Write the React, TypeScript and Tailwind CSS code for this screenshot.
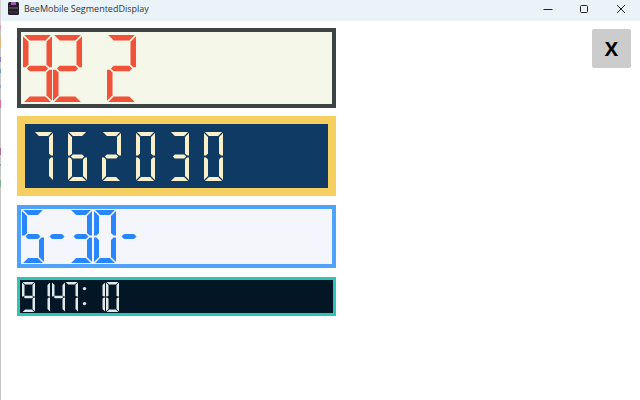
import type { ReactNode } from "react";

const SEGMENTS: Record<string, string> = {
  "0": "abcdef",
  "1": "bc",
  "2": "abdeg",
  "3": "abcdg",
  "4": "bcfg",
  "5": "acdfg",
  "6": "acdefg",
  "7": "abc",
  "9": "abcdfg",
  "-": "g",
  " ": "",
};

// desktop showing through at the window's left edge: [height, colour]
const EDGE: [number, string][] = [
  [25, "#d4d4d4"],
  [5, "#e79ab0"],
  [8, "#c4c4c4"],
  [9, "#e6b77e"],
  [10, "#c4c4c4"],
  [5, "#8f7be0"],
  [7, "#c4c4c4"],
  [4, "#6f9fd8"],
  [12, "#c4c4c4"],
  [3, "#7fa8d0"],
  [12, "#c4c4c4"],
  [8, "#e0709a"],
  [40, "#c4c4c4"],
  [7, "#b06a96"],
  [9, "#c4c4c4"],
  [2, "#7fb08f"],
  [14, "#c4c4c4"],
  [7, "#7fb08f"],
  [213, "#c4c4c4"],
];

interface DigitProps {
  char: string;
  w: number;
  h: number;
  t: number;
  color: string;
  className?: string;
}

// one seven segment digit, segments a-g clockwise from the top, g is the middle bar
function Digit({ char, w, h, t, color, className = "" }: DigitProps) {
  const g = Math.max(0.6, t * 0.22);
  const m = h / 2;
  const polys: Record<string, string> = {
    a: `${g},0 ${w - g},0 ${w - g - t},${t} ${g + t},${t}`,
    b: `${w},${g} ${w},${m - g} ${w - t / 2},${m - g} ${w - t},${m - g - t / 2} ${w - t},${g + t}`,
    c: `${w},${m + g} ${w},${h - g} ${w - t},${h - g - t} ${w - t},${m + g + t / 2} ${w - t / 2},${m + g}`,
    d: `${g},${h} ${w - g},${h} ${w - g - t},${h - t} ${g + t},${h - t}`,
    e: `0,${m + g} 0,${h - g} ${t},${h - g - t} ${t},${m + g + t / 2} ${t / 2},${m + g}`,
    f: `0,${g} 0,${m - g} ${t / 2},${m - g} ${t},${m - g - t / 2} ${t},${g + t}`,
    g: `${t * 0.7},${m} ${t * 1.2},${m - t / 2} ${w - t * 1.2},${m - t / 2} ${w - t * 0.7},${m} ${w - t * 1.2},${m + t / 2} ${t * 1.2},${m + t / 2}`,
  };
  return (
    <svg width={w} height={h} viewBox={`0 0 ${w} ${h}`} className={`block shrink-0 ${className}`}>
      {SEGMENTS[char].split("").map((s) => (
        <polygon key={s} points={polys[s]} fill={color} />
      ))}
    </svg>
  );
}

function Colon({ h, color }: { h: number; color: string }) {
  return (
    <svg width={5} height={h} viewBox={`0 0 5 ${h}`} className="ml-[4px] block shrink-0">
      <circle cx={2.5} cy={h * 0.22} r={1.7} fill={color} />
      <circle cx={2.5} cy={h * 0.72} r={1.7} fill={color} />
    </svg>
  );
}

function TitleBar() {
  return (
    <div className="flex h-[21px] items-center bg-[#eaf3f7] pb-[4px] pl-[7px]">
      <svg width={11} height={13} viewBox="0 0 11 13" className="shrink-0">
        <rect x={0} y={0} width={11} height={13} rx={1.5} fill="#241f2b" />
        <rect x={1} y={5} width={9} height={2} fill="#4a4452" />
        <rect x={1} y={9} width={9} height={2} fill="#35303c" />
        <rect x={3} y={0} width={5} height={3} fill="#9a5fb0" />
      </svg>
      <span className="ml-[5px] text-[9px] text-[#30363a]">BeeMobile SegmentedDisplay</span>
      <div className="ml-auto flex items-center">
        <svg width={10} height={10} viewBox="0 0 10 10" className="mr-[26px]">
          <path d="M0.5 5.5h9" stroke="#222" strokeWidth={1} />
        </svg>
        <svg width={10} height={10} viewBox="0 0 10 10" className="mr-[27px]">
          <rect x={1.5} y={1.5} width={7} height={7} rx={1} fill="none" stroke="#222" strokeWidth={1} />
        </svg>
        <svg width={10} height={10} viewBox="0 0 10 10" className="mr-[14px]">
          <path d="M1 1l8 8M9 1l-8 8" stroke="#222" strokeWidth={1} />
        </svg>
      </div>
    </div>
  );
}

function Panel({ className, children }: { className: string; children: ReactNode }) {
  return <div className={`flex w-[319px] items-center ${className}`}>{children}</div>;
}

export default function App() {
  const red = "#f0533a";
  const cream = "#f9efc8";
  const blue = "#2a86ff";
  const white = "#dfe9e9";

  return (
    <div className="flex h-[400px] w-[640px] overflow-hidden bg-white font-['Open_Sans','Noto_Sans',sans-serif]">
      <div className="flex w-[1px] shrink-0 flex-col">
        {EDGE.map(([h, c], i) => (
          <div key={i} style={{ height: h, backgroundColor: c }} />
        ))}
      </div>
      <div className="min-w-0 flex-1">
        <TitleBar />
        <div className="flex items-start justify-between pt-[7px] pr-[8px] pl-[16px]">
          <div className="flex flex-col">
            <Panel className="h-[80px] border-[4px] border-[#3d4443] bg-[#f5f7e9] pl-[2px]">
              <div className="mt-[1px] flex gap-[1px]">
                <Digit char="9" w={29} h={67} t={5.5} color={red} />
                <Digit char="2" w={29} h={67} t={5.5} color={red} />
                <div className="w-[23px]" />
                <Digit char="2" w={29} h={67} t={5.5} color={red} />
              </div>
            </Panel>
            <Panel className="mt-[8px] h-[80px] border-[8px] border-[#f5d060] bg-[#0f3a63] pl-[9px]">
              <div className="mt-[1px] flex gap-[15px]">
                {"762030".split("").map((c, i) => (
                  <Digit key={i} char={c} w={19} h={49} t={4} color={cream} />
                ))}
              </div>
            </Panel>
            <Panel className="mt-[9px] h-[63px] border-[4px] border-[#4fa3ff] bg-[#f4f6fb] pl-[1px]">
              <div className="flex gap-[2px]">
                {"5-30-".split("").map((c, i) => (
                  <Digit key={i} char={c} w={22} h={53} t={5} color={blue} />
                ))}
              </div>
            </Panel>
            <Panel className="mt-[9px] h-[39px] border-[3px] border-[#2ec4b6] bg-[#021626] pl-[2px]">
              <div className="mt-[1px] flex items-center">
                <Digit char="9" w={13} h={30} t={2.5} color={white} />
                <Digit char="1" w={13} h={30} t={2.5} color={white} className="ml-[2px]" />
                <Digit char="4" w={13} h={30} t={2.5} color={white} className="ml-[2px]" />
                <Digit char="7" w={13} h={30} t={2.5} color={white} />
                <Colon h={30} color={white} />
                <Digit char="1" w={13} h={30} t={2.5} color={white} className="ml-[5px]" />
                <Digit char="0" w={13} h={30} t={2.5} color={white} className="ml-[1px]" />
              </div>
            </Panel>
          </div>
          <button className="mt-[1px] mr-[1px] flex h-[39px] w-[39px] items-center justify-center rounded-[2px] bg-[#cccccc] text-[20px] font-bold text-black">
            X
          </button>
        </div>
      </div>
    </div>
  );
}
